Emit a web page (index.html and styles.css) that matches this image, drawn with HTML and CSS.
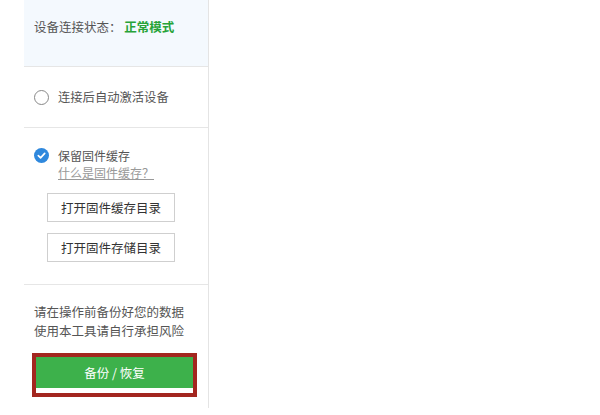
FILE: index.html
```html
<!DOCTYPE html>
<html lang="zh-CN">
<head>
  <meta charset="UTF-8" />
  <title>设备设置</title>
  <link rel="stylesheet" href="styles.css">
</head>
<body>

<div class="page">
  <aside class="sidebar">
    <section class="status">
      设备连接状态： <span class="mode">正常模式</span>
    </section>

    <section class="option">
      <span class="radio"></span>
      <span>连接后自动激活设备</span>
    </section>

    <section class="cache">
      <div class="check-row">
        <span class="check">
          <svg width="15" height="15" viewBox="0 0 16 16">
            <circle cx="8" cy="8" r="8" fill="#2f88dd"/>
            <path d="M4.6 8.2 L7 10.5 L11.4 5.8" fill="none" stroke="#fff" stroke-width="1.8" stroke-linecap="round" stroke-linejoin="round"/>
          </svg>
        </span>
        <div>
          <div>保留固件缓存</div>
          <a class="help" href="#">什么是固件缓存？</a>
        </div>
      </div>
      <button class="folder-btn">打开固件缓存目录</button>
      <button class="folder-btn">打开固件存储目录</button>
    </section>

    <section class="backup">
      <p class="warn">请在操作前备份好您的数据<br>使用本工具请自行承担风险</p>
      <div class="highlight">
        <button class="backup-btn">备份 / 恢复</button>
      </div>
    </section>
  </aside>
  <main class="content"></main>
</div>

</body>
</html>
```

FILE: styles.css
```css
body {
  margin: 0;
  font-family: "Noto Sans CJK SC", "Liberation Sans", sans-serif;
  font-size: 12px;
  color: #555;
  background: #fff;
}

.page {
  display: flex;
  height: 415px;
}

.sidebar {
  width: 184px;
  margin-left: 24px;
  border-right: 1px solid #e4e4e4;
  height: 408px;
}

section {
  border-bottom: 1px solid #e6e6e6;
}

.status {
  height: 67px;
  box-sizing: border-box;
  padding: 18px 0 0 10px;
  background: #f4f9fe;
  line-height: 18px;
  font-size: 12.5px;
}

.mode {
  color: #27a338;
  font-weight: bold;
}

.option {
  height: 61px;
  box-sizing: border-box;
  display: flex;
  align-items: center;
  gap: 9px;
  padding-left: 10px;
  font-size: 12.3px;
}

.radio {
  width: 13px;
  height: 13px;
  border: 1px solid #888;
  border-radius: 50%;
}

.cache {
  height: 157px;
  box-sizing: border-box;
  padding: 19px 0 0 10px;
}

.check-row {
  display: flex;
  gap: 9px;
  line-height: 17px;
}

.check {
  padding-top: 1px;
}

.help {
  color: #999;
  text-decoration: underline;
}

.folder-btn {
  display: block;
  width: 128px;
  height: 29px;
  margin: 12px 0 0 13px;
  background: #fff;
  border: 1px solid #cfcfcf;
  font-family: inherit;
  font-size: 12.5px;
  color: #333;
  padding: 0;
}

.folder-btn + .folder-btn {
  margin-top: 11px;
}

.backup {
  border-bottom: none;
  padding: 17px 0 0 10px;
}

.warn {
  margin: 0;
  line-height: 19px;
  font-size: 12.5px;
}

.highlight {
  width: 157px;
  margin: 13px 0 0 -2px;
  border: 4px solid #a3261f;
  padding-bottom: 5px;
  background: #fff;
}

.backup-btn {
  display: block;
  width: 100%;
  height: 31px;
  border: none;
  background: #3db14b;
  color: #fff;
  font-family: inherit;
  font-size: 12.5px;
}

.content {
  flex: 1;
}
```
